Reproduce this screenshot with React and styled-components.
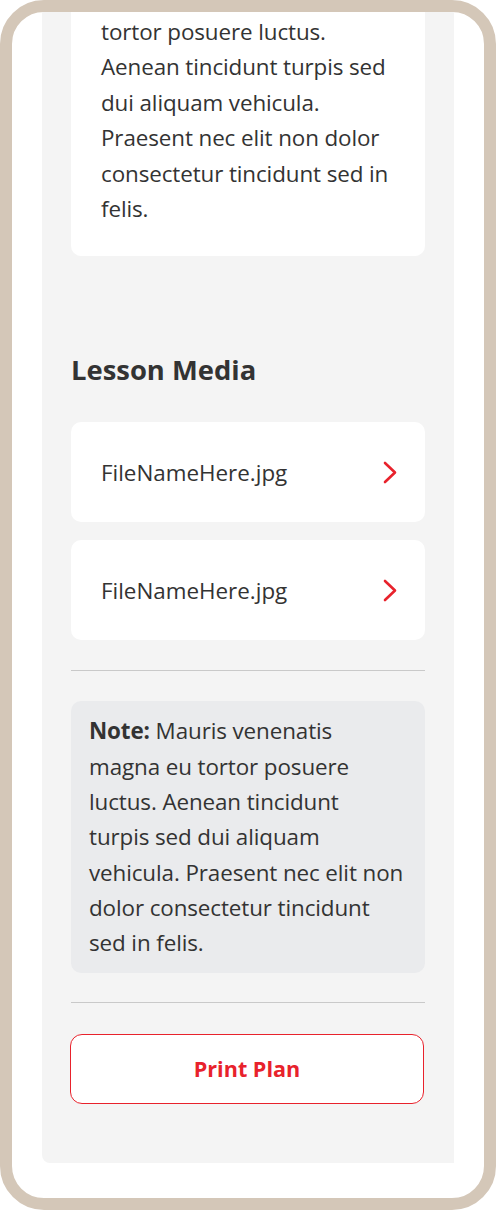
import React from 'react'
import styled, { createGlobalStyle } from 'styled-components'

const GlobalStyle = createGlobalStyle`
  body {
    margin: 0;
    background: #fff;
    font-family: "Open Sans", "Noto Sans", sans-serif;
    color: #333;
  }
  * { box-sizing: border-box; }
`

const Frame = styled.div`
  width: 496px;
  height: 1210px;
  border: 12px solid #d4c7b8;
  border-radius: 44px;
  background: #fff;
  overflow: hidden;
  padding: 0 30px;
`

const Panel = styled.div`
  margin-top: -28px;
  background: #f4f4f4;
  border-radius: 0 0 0 8px;
  padding: 0 29px 59px;
  display: flex;
  flex-direction: column;
`

const Card = styled.div`
  background: #fff;
  border-radius: 10px;
  padding: 30px 16px 30px 30px;
  font-size: 22.4px;
  line-height: 35.4px;
  letter-spacing: -0.1px;
`

const Heading = styled.h2`
  margin: 96px 0 34px;
  font-size: 27.4px;
  line-height: 36px;
  font-weight: 700;
  color: #333;
`

const FileList = styled.div`
  display: flex;
  flex-direction: column;
  gap: 18px;
`

const FileRow = styled.div`
  height: 100px;
  background: #fff;
  border-radius: 10px;
  padding: 0 28px 0 30px;
  display: flex;
  align-items: center;
  justify-content: space-between;
  font-size: 22.4px;
`

const Divider = styled.hr`
  margin: ${(p) => p.$top}px 0 ${(p) => p.$bottom}px;
  border: 0;
  border-top: 1px solid #c9c9c9;
  height: 0;
`

const Note = styled.div`
  background: #eaebed;
  border-radius: 10px;
  padding: 12px 8px 12px 18px;
  font-size: 22.4px;
  line-height: 35.3px;
  letter-spacing: -0.1px;

  b { font-weight: 700; }
`

const PrintButton = styled.button`
  height: 70px;
  margin: 0 1px 0 -1px;
  border: 1.5px solid #e8222c;
  border-radius: 12px;
  background: #fff;
  color: #e8222c;
  font-family: inherit;
  font-size: 21.6px;
  font-weight: 700;
  cursor: pointer;
`

const Chevron = () => (
  <svg width="14" height="23" viewBox="0 0 14 23" fill="none">
    <polyline points="2,2 12,11.5 2,21" stroke="#e8222c" strokeWidth="2.6" strokeLinecap="round" strokeLinejoin="round" />
  </svg>
)

const files = ['FileNameHere.jpg', 'FileNameHere.jpg']

export default function App() {
  return (
    <>
      <GlobalStyle />
      <Frame>
        <Panel>
          <Card>
            tortor posuere luctus.<br />
            Aenean tincidunt turpis sed<br />
            dui aliquam vehicula.<br />
            Praesent nec elit non dolor<br />
            consectetur tincidunt sed in<br />
            felis.
          </Card>
          <Heading>Lesson Media</Heading>
          <FileList>
            {files.map((f, i) => (
              <FileRow key={i}>
                <span>{f}</span>
                <Chevron />
              </FileRow>
            ))}
          </FileList>
          <Divider $top={30} $bottom={30} />
          <Note>
            <b>Note:</b> Mauris venenatis<br />
            magna eu tortor posuere<br />
            luctus. Aenean tincidunt<br />
            turpis sed dui aliquam<br />
            vehicula. Praesent nec elit non<br />
            dolor consectetur tincidunt<br />
            sed in felis.
          </Note>
          <Divider $top={29} $bottom={31} />
          <PrintButton>Print Plan</PrintButton>
        </Panel>
      </Frame>
    </>
  )
}
